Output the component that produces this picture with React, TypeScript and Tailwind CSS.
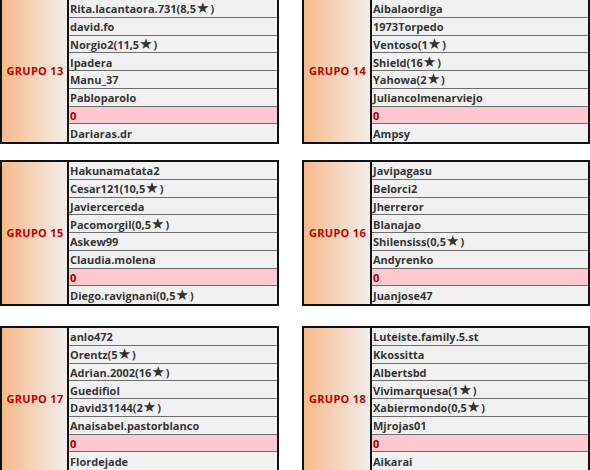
import React from "react";

type Group = { name: string; rows: string[] };

const groups: Group[] = [
  { name: "GRUPO 13", rows: ["Rita.lacantaora.731(8,5*)", "david.fo", "Norgio2(11,5*)", "Ipadera", "Manu_37", "Pabloparolo", "0", "Dariaras.dr"] },
  { name: "GRUPO 14", rows: ["Aibalaordiga", "1973Torpedo", "Ventoso(1*)", "Shield(16*)", "Yahowa(2*)", "Juliancolmenarviejo", "0", "Ampsy"] },
  { name: "GRUPO 15", rows: ["Hakunamatata2", "Cesar121(10,5*)", "Javiercerceda", "Pacomorgil(0,5*)", "Askew99", "Claudia.molena", "0", "Diego.ravignani(0,5*)"] },
  { name: "GRUPO 16", rows: ["Javipagasu", "Belorci2", "Jherreror", "Blanajao", "Shilensiss(0,5*)", "Andyrenko", "0", "Juanjose47"] },
  { name: "GRUPO 17", rows: ["anlo472", "Orentz(5*)", "Adrian.2002(16*)", "Guedifiol", "David31144(2*)", "Anaisabel.pastorblanco", "0", "Flordejade"] },
  { name: "GRUPO 18", rows: ["Luteiste.family.5.st", "Kkossitta", "Albertsbd", "Vivimarquesa(1*)", "Xabiermondo(0,5*)", "Mjrojas01", "0", "Aikarai"] },
];

function Name({ text }: { text: string }) {
  if (text.includes("*")) {
    const [a, b] = text.split("*");
    return (
      <span>
        {a}
        <span className="text-[15px] mr-[1px] text-[#333]" style={{ fontFamily: '"DejaVu Sans", sans-serif' }}>★</span>
        {b}
      </span>
    );
  }
  return <span>{text}</span>;
}

function Table({ g, right }: { g: Group; right?: boolean }) {
  return (
    <div className={`flex border-2 border-[#111] ${right ? "w-[288px]" : "w-[279px]"}`}>
      <div
        className={`${right ? "w-[68px]" : "w-[67px]"} shrink-0 flex items-center justify-center pl-[1px] border-r-2 border-[#111] bg-gradient-to-r from-[#f6b98a] to-[#f2eeeb] text-[#c00000] font-bold text-[11px] tracking-[0.3px]`}
      >
        {g.name}
      </div>
      <div className="flex-1 flex flex-col">
        {g.rows.map((r, i) => (
          <div
            key={i}
            className={`h-[17.75px] flex items-center pt-[1px] pl-[1px] leading-none text-[11px] font-bold ${
              i < 7 ? "border-b border-[#6e6e6e]" : ""
            } ${r === "0" ? "bg-[#ffc7ce] text-[#9c0006]" : "bg-[#f1f1f1] text-[#363636]"}`}
          >
            <Name text={r} />
          </div>
        ))}
      </div>
    </div>
  );
}

export default function App() {
  return (
    <div
      className="w-[590px] h-[470px] overflow-hidden bg-white"
      style={{ fontFamily: '"Open Sans", "DejaVu Sans", sans-serif' }}
    >
      <div className="mt-[-2px] flex flex-col">
        <div className="flex gap-[23px]">
          <Table g={groups[0]} />
          <Table g={groups[1]} right />
        </div>
        <div className="flex gap-[23px] mt-[16px]">
          <Table g={groups[2]} />
          <Table g={groups[3]} right />
        </div>
        <div className="flex gap-[23px] mt-[20px]">
          <Table g={groups[4]} />
          <Table g={groups[5]} right />
        </div>
      </div>
    </div>
  );
}
